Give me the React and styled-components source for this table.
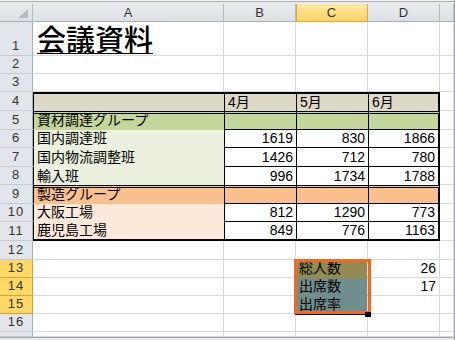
import React from 'react';
import styled, { createGlobalStyle } from 'styled-components';

const Global = createGlobalStyle`
  html, body { margin: 0; padding: 0; background: #fff; }
  body { font-family: "Liberation Sans", "Noto Sans CJK JP", sans-serif; }
`;

const GRIDLINE = '1px solid #d6d8da';
const LINE = '1px solid #000';
const THICK = '2px solid #000';
const DOUBLE = '3px double #000';

const Window = styled.div`
  width: 455px;
  height: 340px;
  box-sizing: border-box;
  border-right: 1px solid #a3a8ae;
  overflow: hidden;
  display: flex;
  flex-direction: column;
  background: #fff;
`;

const TopFrame = styled.div`
  flex: none;
  height: 4px;
  background: linear-gradient(#f4f4f4 0 1px, #a9adb2 1px 2px, #e8eaec 2px 4px);
`;

const BottomFrame = styled.div`
  flex: none;
  height: 3px;
  background: linear-gradient(#a3a8ae 0 1px, #e6e8ea 1px);
`;

const Sheet = styled.div`
  flex: none;
  display: grid;
  grid-template-columns: 33px 191px 72px 72px 72px 14px;
  grid-template-rows: ${(p) => p.$rows};
`;

const Corner = styled.div`
  grid-row: 1;
  grid-column: 1;
  box-sizing: border-box;
  display: flex;
  align-items: flex-end;
  justify-content: flex-end;
  padding: 0 4px 3px 0;
  background: linear-gradient(#e9ecef, #dde0e4);
  border-right: 1px solid #b4bac1;
  border-bottom: 1px solid #a7afb8;
`;

const ColHead = styled.div`
  grid-row: 1;
  grid-column: ${(p) => p.$col};
  box-sizing: border-box;
  display: flex;
  align-items: center;
  justify-content: center;
  font-size: 13px;
  color: #333;
  background: ${(p) =>
    p.$sel ? 'linear-gradient(#fde9a2, #f9d466)' : 'linear-gradient(#e9ecef, #dde0e4)'};
  border-right: 1px solid ${(p) => (p.$sel ? '#e3a53f' : '#b4bac1')};
  border-bottom: 1px solid ${(p) => (p.$sel ? '#e3a53f' : '#a7afb8')};
  box-shadow: ${(p) => (p.$sel ? 'inset 1px 0 0 #e3a53f' : 'none')};
`;

const RowHead = styled.div`
  grid-row: ${(p) => p.$row};
  grid-column: 1;
  box-sizing: border-box;
  display: flex;
  justify-content: center;
  align-items: ${(p) => (p.$clip ? 'flex-start' : 'flex-end')};
  padding: ${(p) => (p.$clip ? '3px 0 0' : '0 0 2px')};
  overflow: hidden;
  font-size: 13px;
  line-height: 14px;
  letter-spacing: 1px;
  color: #333;
  background: ${(p) => (p.$sel ? '#ffd966' : '#e2e5e9')};
  border-right: 1px solid ${(p) => (p.$sel ? '#d9a13d' : '#a7afb8')};
  border-bottom: 1px solid ${(p) => (p.$sel ? '#d9a13d' : '#c5cad0')};
`;

const Cell = styled.div`
  grid-row: ${(p) => p.$row};
  grid-column: ${(p) => p.$col};
  box-sizing: border-box;
  min-width: 0;
  display: flex;
  align-items: flex-end;
  justify-content: ${(p) => (p.$right ? 'flex-end' : 'flex-start')};
  padding: ${(p) => (p.$right ? '0 3px 1px 0' : '0 0 1px 3px')};
  background: ${(p) => p.$bg || '#fff'};
  border-top: ${(p) => p.$bt || '0'};
  border-left: ${(p) => p.$bl || '0'};
  border-right: ${(p) => p.$br || GRIDLINE};
  border-bottom: ${(p) => p.$bb || GRIDLINE};
  font-size: 14px;
  line-height: 15px;
  color: #000;
  white-space: nowrap;
`;

const Title = styled.span`
  font-family: "Noto Sans CJK JP", sans-serif;
  font-size: 29px;
  font-weight: 500;
  line-height: 32px;
  text-decoration: underline;
  text-decoration-thickness: 1px;
  text-underline-offset: 2px;
  margin-left: 1px;
`;

const Selection = styled.div`
  grid-column: 4;
  grid-row: 14 / 17;
  margin: -1px -3px 0 -2px;
  border: 3px solid #f26a22;
  position: relative;
  z-index: 2;
  pointer-events: none;
`;

const SelectionEdge = styled.div`
  position: absolute;
  left: -2px;
  right: 2px;
  bottom: -4px;
  height: 1px;
  background: #000;
`;

const FillHandle = styled.div`
  position: absolute;
  right: -3px;
  bottom: -6px;
  width: 6px;
  height: 5px;
  background: #000;
`;

const heights = [18, 34, 18, 18, 19, 19, 18, 19, 18, 19, 18, 19, 19, 18, 18, 18, 18, 5];

const BEIGE = '#ddd9c4';
const GREEN = '#c4d79b';
const LIGHT_GREEN = '#ebf1de';
const ORANGE = '#fabf8f';
const PEACH = '#fde9d9';
const OLIVE = '#948a54';
const TEAL = '#6f8e8d';

const sideBorder = (i) => (i === 3 ? THICK : '0');

const headerRow = () => [
  { bg: BEIGE, bt: THICK, bl: LINE, br: '0', bb: '0' },
  ...['4月', '5月', '6月'].map((t, i) => ({
    text: t,
    bg: BEIGE,
    bt: THICK,
    bl: LINE,
    br: sideBorder(i + 1),
    bb: '0',
  })),
];

const groupRow = (label, bg) => [
  { text: label, bg, bt: DOUBLE, bl: LINE, br: '0', bb: `1px solid ${bg}` },
  ...[1, 2, 3].map((i) => ({ bg, bt: DOUBLE, bl: LINE, br: sideBorder(i), bb: LINE })),
];

const detailRow = (label, bg, nums, bottom) => [
  { text: label, bg, bl: LINE, br: '0', bb: bottom || `1px solid ${bg}` },
  ...nums.map((n, i) => ({
    text: String(n),
    right: true,
    bl: LINE,
    br: sideBorder(i + 1),
    bb: bottom || LINE,
  })),
];

const data = {
  1: [{ title: '会議資料' }],
  4: headerRow(),
  5: groupRow('資材調達グループ', GREEN),
  6: detailRow('国内調達班', LIGHT_GREEN, [1619, 830, 1866]),
  7: detailRow('国内物流調整班', LIGHT_GREEN, [1426, 712, 780]),
  8: detailRow('輸入班', LIGHT_GREEN, [996, 1734, 1788], '0'),
  9: groupRow('製造グループ', ORANGE),
  10: detailRow('大阪工場', PEACH, [812, 1290, 773]),
  11: detailRow('鹿児島工場', PEACH, [849, 776, 1163], THICK),
  13: [{}, {}, { text: '総人数', bg: OLIVE, bb: `1px solid ${OLIVE}` }, { text: '26', right: true }],
  14: [{}, {}, { text: '出席数', bg: TEAL, bb: `1px solid ${TEAL}` }, { text: '17', right: true }],
  15: [{}, {}, { text: '出席率', bg: TEAL, bb: `1px solid ${TEAL}` }],
};

const columns = ['A', 'B', 'C', 'D', ''];

export default function App() {
  const rows = Array.from({ length: 17 }, (_, i) => i + 1);
  return (
    <>
      <Global />
      <Window>
        <TopFrame />
        <Sheet $rows={heights.map((h) => `${h}px`).join(' ')}>
          <Corner>
            <svg width="10" height="9" viewBox="0 0 10 9">
              <polygon points="10,0 10,9 0,9" fill="#b7bcc2" />
            </svg>
          </Corner>
          {columns.map((c, i) => (
            <ColHead key={`h${i}`} $col={i + 2} $sel={c === 'C'}>
              {c}
            </ColHead>
          ))}
          {rows.map((r) => (
            <React.Fragment key={r}>
              <RowHead $row={r + 1} $sel={r >= 13 && r <= 15} $clip={r === 17}>
                {r}
              </RowHead>
              {columns.map((_, ci) => {
                const spec = (data[r] && data[r][ci]) || {};
                return (
                  <Cell
                    key={ci}
                    $row={r + 1}
                    $col={ci + 2}
                    $bg={spec.bg}
                    $bt={spec.bt}
                    $bl={spec.bl}
                    $br={spec.br}
                    $bb={spec.bb}
                    $right={spec.right}
                  >
                    {spec.title ? <Title>{spec.title}</Title> : spec.text}
                  </Cell>
                );
              })}
            </React.Fragment>
          ))}
          <Selection>
            <SelectionEdge />
            <FillHandle />
          </Selection>
        </Sheet>
        <BottomFrame />
      </Window>
    </>
  );
}
